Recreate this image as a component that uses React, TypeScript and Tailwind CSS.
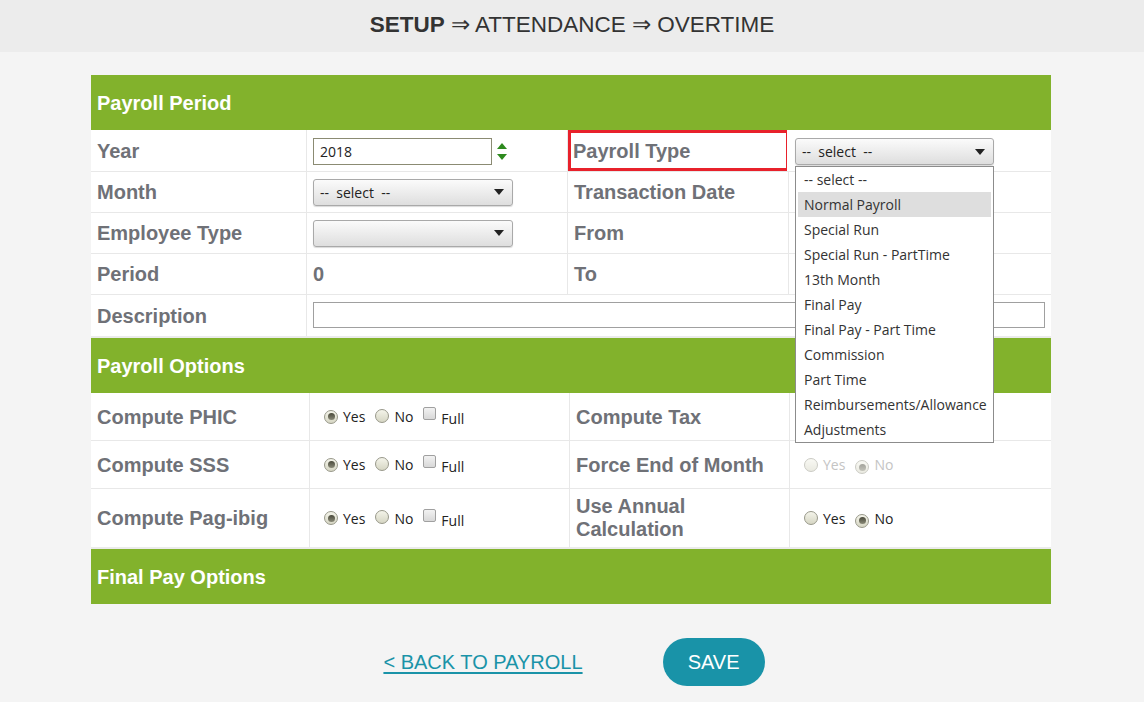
import { ReactNode } from "react";

const LABEL = "font-['Liberation_Sans',Arial,sans-serif] font-bold text-[20px] text-[#6f7177]";
const UI = "font-['Open_Sans','Noto_Sans',sans-serif] text-[14px] text-[#222]";

const payrollTypes = [
  "-- select --",
  "Normal Payroll",
  "Special Run",
  "Special Run - PartTime",
  "13th Month",
  "Final Pay",
  "Final Pay - Part Time",
  "Commission",
  "Part Time",
  "Reimbursements/Allowance",
  "Adjustments",
];

function SectionHeader({ title }: { title: string }) {
  return (
    <div className="h-[55px] bg-[#82b22c] flex items-center px-[6px]">
      <span className="font-['Liberation_Sans',Arial,sans-serif] font-bold text-[20px] text-white">{title}</span>
    </div>
  );
}

function Select({ value = "", width = "w-[200px]" }: { value?: string; width?: string }) {
  return (
    <div
      className={`${width} h-[27px] rounded-[3px] border border-[#a9a9a9] bg-gradient-to-b from-[#fbfbfb] to-[#dedede] flex items-center justify-between pl-[6px] pr-[8px] shadow-[0_1px_1px_rgba(0,0,0,0.15)]`}
    >
      <span className={`${UI} whitespace-pre`}>{value}</span>
      <svg width="10" height="6" viewBox="0 0 10 6">
        <path d="M0 0h10L5 6z" fill="#222" />
      </svg>
    </div>
  );
}

function Radio({ checked = false, disabled = false }: { checked?: boolean; disabled?: boolean }) {
  return (
    <span
      className={`inline-flex items-center justify-center w-[14px] h-[14px] rounded-full border border-[#98988a] bg-gradient-to-b from-[#f4f4ea] to-[#d6d6c4] ${disabled ? "opacity-50" : ""}`}
    >
      {checked && <span className="w-[7px] h-[7px] rounded-full bg-gradient-to-b from-[#4a4a3c] to-[#8a8a78]" />}
    </span>
  );
}

function Check() {
  return <span className="inline-block w-[13px] h-[13px] rounded-[2px] border border-[#a0a0a0] bg-gradient-to-b from-[#f2f2f2] to-[#d8d8d8] -mt-[6px]" />;
}

function YesNo({ yes, full = false, disabled = false }: { yes: boolean; full?: boolean; disabled?: boolean }) {
  const txt = disabled ? "text-[#c4c4c4]" : "";
  return (
    <div className="flex items-center">
      <Radio checked={yes} disabled={disabled} />
      <span className={`${UI} ${txt} ml-[5px]`}>Yes</span>
      <span className="ml-[10px]"><Radio checked={!yes} disabled={disabled} /></span>
      <span className={`${UI} ${txt} ml-[5px]`}>No</span>
      {full && (
        <>
          <span className="ml-[10px] flex"><Check /></span>
          <span className={`${UI} ml-[5px] mt-[4px]`}>Full</span>
        </>
      )}
    </div>
  );
}

function Cell({ children, className = "" }: { children?: ReactNode; className?: string }) {
  return <div className={`flex items-center px-[6px] border-r border-[#e8e8e8] last:border-r-0 ${className}`}>{children}</div>;
}

export default function App() {
  return (
    <div className="min-h-[702px] bg-[#f4f4f4]">
      <div className="h-[52px] bg-[#ececec] flex items-center justify-center">
        <h1 className="font-['Liberation_Sans',Arial,sans-serif] text-[22.5px] text-[#333] -mt-[2px]">
          <span className="font-bold">SETUP</span> ⇒ ATTENDANCE ⇒ OVERTIME
        </h1>
      </div>

      <div className="w-[960px] ml-[91px] mt-[23px]">
        <SectionHeader title="Payroll Period" />
        <div className="relative bg-white">
          {/* row 1 */}
          <div className="grid grid-cols-[216px_261px_221px_262px] h-[42px] border-b border-[#e8e8e8]">
            <Cell><span className={LABEL}>Year</span></Cell>
            <Cell>
              <div className="flex items-center mt-[2px]">
                <div className="w-[179px] h-[27px] border border-[#8b8b73] bg-white flex items-center px-[6px]">
                  <span className={UI}>2018</span>
                </div>
                <div className="ml-[5px] flex flex-col gap-[5px]">
                  <svg width="10" height="6" viewBox="0 0 10 6"><path d="M5 0l5 6H0z" fill="#2e8a1e" /></svg>
                  <svg width="10" height="6" viewBox="0 0 10 6"><path d="M0 0h10L5 6z" fill="#2e8a1e" /></svg>
                </div>
              </div>
            </Cell>
            <Cell className="border-[3px] border-[#e8212b] !pl-[2px] w-[219px]"><span className={LABEL}>Payroll Type</span></Cell>
            <Cell><div className="mt-[2px]"><Select value="--  select  --" width="w-[199px]" /></div></Cell>
          </div>
          {/* row 2 */}
          <div className="grid grid-cols-[216px_261px_221px_262px] h-[41px] border-b border-[#e8e8e8]">
            <Cell><span className={LABEL}>Month</span></Cell>
            <Cell><Select value="--  select  --" /></Cell>
            <Cell><span className={LABEL}>Transaction Date</span></Cell>
            <Cell />
          </div>
          <div className="grid grid-cols-[216px_261px_221px_262px] h-[41px] border-b border-[#e8e8e8]">
            <Cell><span className={LABEL}>Employee Type</span></Cell>
            <Cell><Select /></Cell>
            <Cell><span className={LABEL}>From</span></Cell>
            <Cell />
          </div>
          <div className="grid grid-cols-[216px_261px_221px_262px] h-[41px] border-b border-[#e8e8e8]">
            <Cell><span className={LABEL}>Period</span></Cell>
            <Cell><span className={LABEL}>0</span></Cell>
            <Cell><span className={LABEL}>To</span></Cell>
            <Cell />
          </div>
          <div className="grid grid-cols-[216px_744px] h-[43px] border-b-[2px] border-[#ebebeb]">
            <Cell><span className={LABEL}>Description</span></Cell>
            <Cell>
              <div className="w-[732px] h-[26px] border border-[#a0a0a0] bg-white -mt-[2px]" />
            </Cell>
          </div>

          {/* Payroll type dropdown list */}
          <div className="absolute left-[704px] top-[36px] z-10 w-[199px] border border-[#8c8c8c] bg-white px-[2px]">
            {payrollTypes.map((t, i) => (
              <div
                key={t}
                className={`h-[25px] flex items-center px-[6px] ${UI} text-[#333] ${i === 1 ? "bg-[#dedede]" : ""}`}
              >
                {t}
              </div>
            ))}
          </div>
        </div>

        <SectionHeader title="Payroll Options" />
        <div className="bg-white">
          <div className="grid grid-cols-[219px_260px_220px_261px] h-[48px] border-b border-[#e8e8e8]">
            <Cell><span className={LABEL}>Compute PHIC</span></Cell>
            <Cell className="pl-[14px]"><YesNo yes full /></Cell>
            <Cell><span className={LABEL}>Compute Tax</span></Cell>
            <Cell />
          </div>
          <div className="grid grid-cols-[219px_260px_220px_261px] h-[48px] border-b border-[#e8e8e8]">
            <Cell><span className={LABEL}>Compute SSS</span></Cell>
            <Cell className="pl-[14px]"><YesNo yes full /></Cell>
            <Cell><span className={LABEL}>Force End of Month</span></Cell>
            <Cell className="pl-[14px]"><YesNo yes={false} disabled /></Cell>
          </div>
          <div className="grid grid-cols-[219px_260px_220px_261px] h-[60px] border-b-[2px] border-[#ebebeb]">
            <Cell><span className={LABEL}>Compute Pag-ibig</span></Cell>
            <Cell className="pl-[14px]"><YesNo yes full /></Cell>
            <Cell><span className={`${LABEL} leading-[23px]`}>Use Annual<br />Calculation</span></Cell>
            <Cell className="pl-[14px]"><YesNo yes={false} /></Cell>
          </div>
        </div>

        <SectionHeader title="Final Pay Options" />
      </div>

      <div className="flex items-center justify-center gap-[80px] mt-[34px] pl-[4px]">
        <a href="#" className="font-['Liberation_Sans',Arial,sans-serif] text-[20px] text-[#1a93a8] underline underline-offset-[3px]">
          &lt; BACK TO PAYROLL
        </a>
        <button className="w-[102px] h-[48px] rounded-full bg-[#1993a8] text-white font-['Liberation_Sans',Arial,sans-serif] text-[20px]">
          SAVE
        </button>
      </div>
    </div>
  );
}
